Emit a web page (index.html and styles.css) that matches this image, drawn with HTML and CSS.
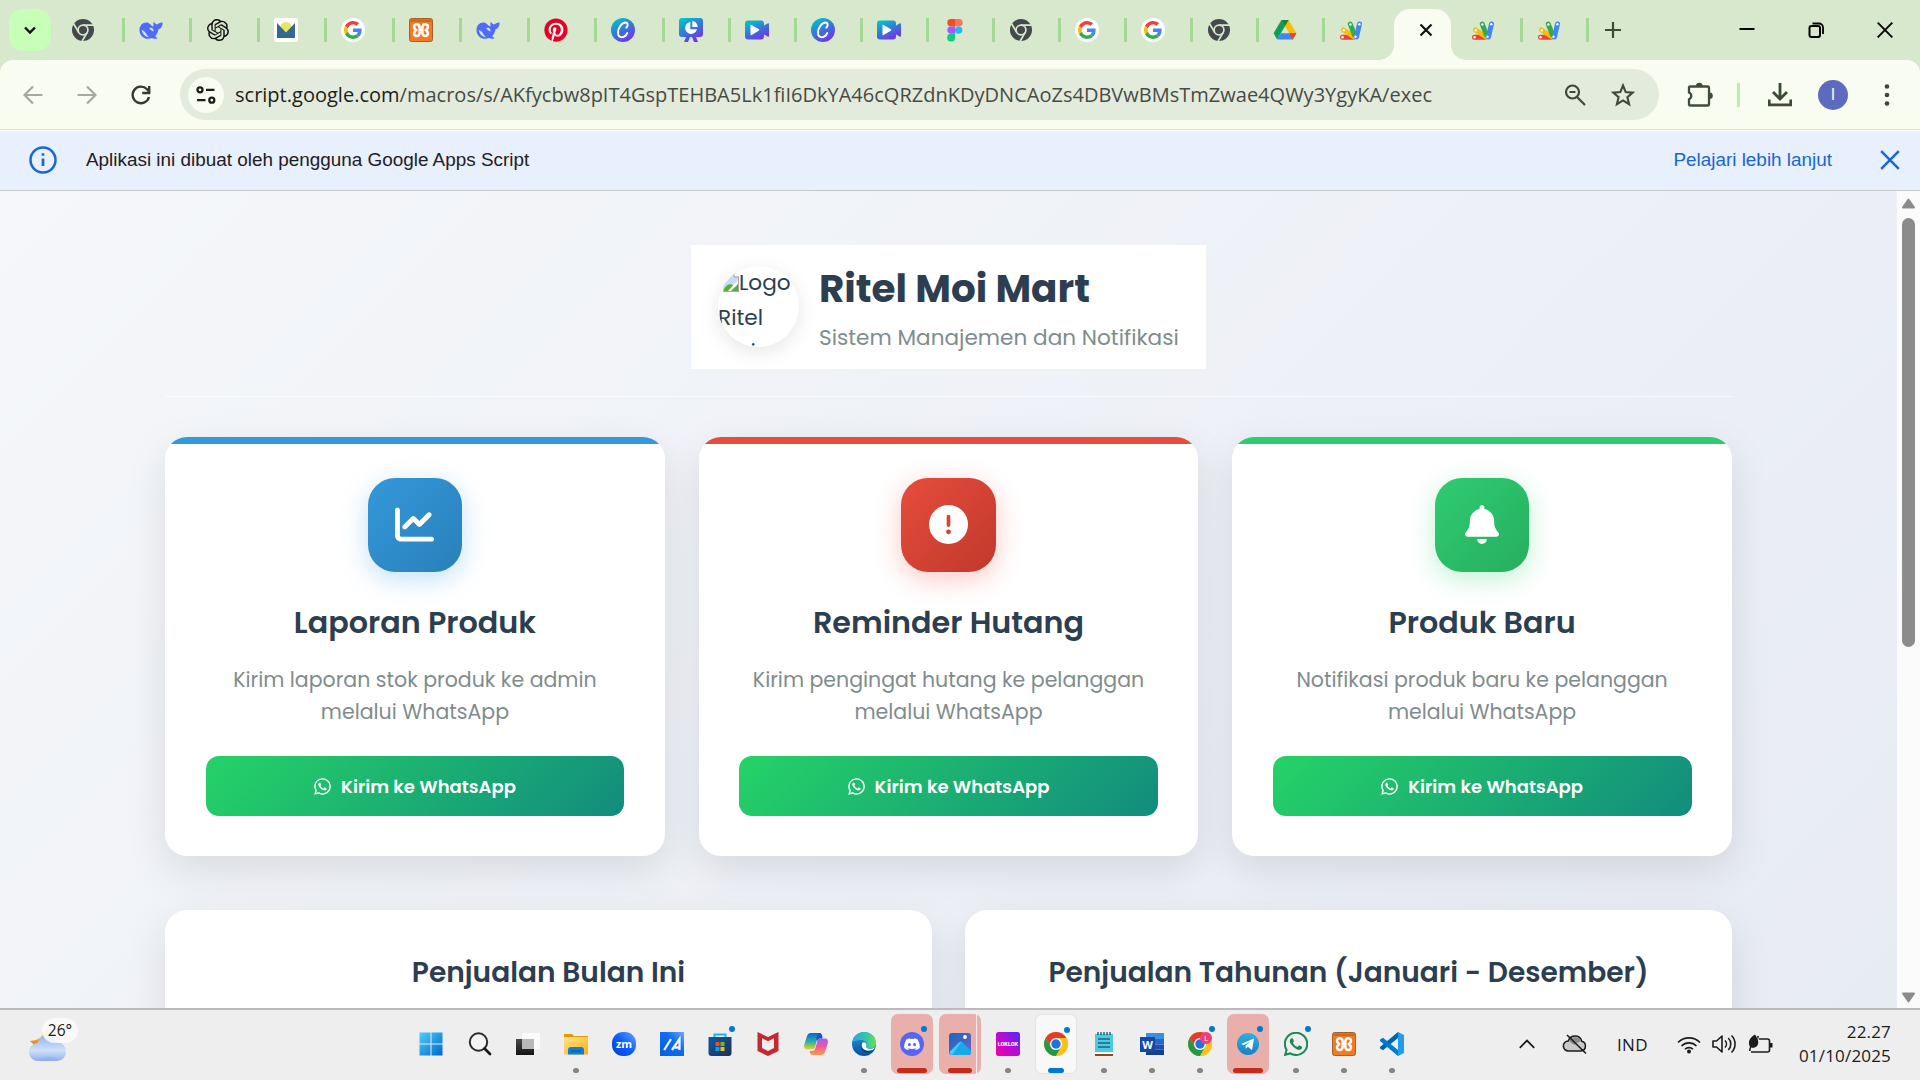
FILE: index.html
```html
<!DOCTYPE html>
<html lang="id">
<head>
<meta charset="utf-8">
<title>Ritel Moi Mart</title>
<link rel="stylesheet" href="styles.css">
</head>
<body>
<svg class="defs" width="0" height="0" aria-hidden="true">
  <defs>
    <linearGradient id="gCanva" x1="0.2" y1="0" x2="0.8" y2="1"><stop offset="0" stop-color="#00c4cc"/><stop offset=".5" stop-color="#3a74d8"/><stop offset="1" stop-color="#7d2ae8"/></linearGradient>
    <linearGradient id="gWin" x1="0" y1="0" x2="1" y2="1"><stop offset="0" stop-color="#4cd0fb"/><stop offset="1" stop-color="#0067c9"/></linearGradient>
    <linearGradient id="gCloud" x1="0" y1="0" x2="0" y2="1"><stop offset="0" stop-color="#8fb4f3"/><stop offset=".6" stop-color="#cfe0f8"/><stop offset="1" stop-color="#8eaef0"/></linearGradient>
    <linearGradient id="gSun" x1="0" y1="0" x2="0" y2="1"><stop offset="0" stop-color="#ffd36a"/><stop offset="1" stop-color="#f07a13"/></linearGradient>
    <linearGradient id="gFolder" x1="0" y1="0" x2="1" y2="1"><stop offset="0" stop-color="#ffe08a"/><stop offset="1" stop-color="#f9b50f"/></linearGradient>
    <linearGradient id="gZoom" x1="0" y1="1" x2="1" y2="0"><stop offset="0" stop-color="#0041c9"/><stop offset=".5" stop-color="#0b5cff"/><stop offset="1" stop-color="#6aa5ff"/></linearGradient>
    <linearGradient id="gMa" x1="0" y1="1" x2="1" y2="0"><stop offset="0" stop-color="#0560dd"/><stop offset=".6" stop-color="#0d6df0"/><stop offset="1" stop-color="#6fa8f8"/></linearGradient>
    <linearGradient id="gStore" x1="0" y1="0" x2="1" y2="1"><stop offset="0" stop-color="#0f5ca8"/><stop offset="1" stop-color="#1c2f55"/></linearGradient>
    <linearGradient id="gCopA" x1="0" y1="0" x2="0" y2="1"><stop offset="0" stop-color="#0b63d8"/><stop offset=".55" stop-color="#2fb6a0"/><stop offset="1" stop-color="#f3d21b"/></linearGradient>
    <linearGradient id="gCopB" x1="0" y1="0" x2="0" y2="1"><stop offset="0" stop-color="#a45cf0"/><stop offset=".5" stop-color="#f0599a"/><stop offset="1" stop-color="#ff9a4c"/></linearGradient>
    <linearGradient id="gEdge" x1="0" y1="0" x2="1" y2="0"><stop offset="0" stop-color="#2aa6df"/><stop offset=".6" stop-color="#35c7a8"/><stop offset="1" stop-color="#6be04a"/></linearGradient>
    <linearGradient id="gEdgeB" x1="0" y1="0" x2="0" y2="1"><stop offset="0" stop-color="#1f9ae0"/><stop offset="1" stop-color="#0c4f9c"/></linearGradient>
    <linearGradient id="gPhoto" x1="0" y1="0" x2="1" y2="1"><stop offset="0" stop-color="#0f6cc6"/><stop offset="1" stop-color="#7b5eb5"/></linearGradient>
    <linearGradient id="gLok" x1="0" y1="1" x2="1" y2="0"><stop offset="0" stop-color="#f500a0"/><stop offset=".5" stop-color="#b80dd0"/><stop offset="1" stop-color="#4b2bff"/></linearGradient>
    <linearGradient id="gTel" x1="0" y1="0" x2="0" y2="1"><stop offset="0" stop-color="#2fb0e6"/><stop offset="1" stop-color="#1583c4"/></linearGradient>
    <linearGradient id="gTask" x1="0" y1="0" x2="0" y2="1"><stop offset="0" stop-color="#4a4a4a"/><stop offset="1" stop-color="#141414"/></linearGradient>
  </defs>

  <symbol id="chromeGray" viewBox="0 0 24 24">
    <circle cx="12" cy="12" r="11" fill="#45494d"/>
    <circle cx="12" cy="12" r="4.900" fill="none" stroke="#d8e8cc" stroke-width="1.700"/>
    <path d="M12 7.100H22M7.700 14.400 2.600 5.800M16.200 14.400 11.200 23" stroke="#d8e8cc" stroke-width="1.700" fill="none"/>
  </symbol>
  <symbol id="whale" viewBox="0 0 24 24">
    <path d="M.5 12C.5 7.500 3.500 4.500 7.500 4.500c1.500 0 2.500.6 3.500 1.500l1.500 1.500c.8.600 1.500.900 2.200 1-.5-1.500-.5-3.500.3-4.800.8 1.300 1.500 2.300 2.800 2.700 1.500-.5 2.800-2 5.900-2-.1 3.600-1.600 6-4.200 6.900-.5 3-1.700 5.200-3.300 6.900l2.300 2c-1.700.9-3.800.9-5.600-.1C7.200 22.400.5 19.200.5 12zm2.200 0c.6 4 3.800 7 7.300 7.200C7.200 16.800 6.500 13 2.700 12zm9.600-2.300c-1.200-.2-2 .4-1.800 1.200 1 .2 2.500 2.200 3.900 2.500.5-1.400-.6-3.400-2.100-3.700z" fill="#4d6bfe" fill-rule="evenodd"/>
  </symbol>
  <symbol id="gpt" viewBox="0 0 24 24"><path fill="#111" d="M22.2819 9.8211a5.9847 5.9847 0 0 0-.5157-4.9108 6.0462 6.0462 0 0 0-6.5098-2.9A6.0651 6.0651 0 0 0 4.9807 4.1818a5.9847 5.9847 0 0 0-3.9977 2.9 6.0462 6.0462 0 0 0 .7427 7.0966 5.98 5.98 0 0 0 .511 4.9107 6.051 6.051 0 0 0 6.5146 2.9001A5.9847 5.9847 0 0 0 13.2599 24a6.0557 6.0557 0 0 0 5.7718-4.2058 5.9894 5.9894 0 0 0 3.9977-2.9001 6.0557 6.0557 0 0 0-.7475-7.0729zm-9.022 12.6081a4.4755 4.4755 0 0 1-2.8764-1.0408l.1419-.0804 4.7783-2.7582a.7948.7948 0 0 0 .3927-.6813v-6.7369l2.02 1.1686a.071.071 0 0 1 .038.052v5.5826a4.504 4.504 0 0 1-4.4945 4.4944zm-9.6607-4.1254a4.4708 4.4708 0 0 1-.5346-3.0137l.142.0852 4.783 2.7582a.7712.7712 0 0 0 .7806 0l5.8428-3.3685v2.3324a.0804.0804 0 0 1-.0332.0615L9.74 19.9502a4.4992 4.4992 0 0 1-6.1408-1.6464zM2.3408 7.8956a4.485 4.485 0 0 1 2.3655-1.9728V11.6a.7664.7664 0 0 0 .3879.6765l5.8144 3.3543-2.0201 1.1685a.0757.0757 0 0 1-.071 0l-4.8303-2.7865A4.504 4.504 0 0 1 2.3408 7.872zm16.5963 3.8558L13.1038 8.364 15.1192 7.2a.0757.0757 0 0 1 .071 0l4.8303 2.7913a4.4944 4.4944 0 0 1-.6765 8.1042v-5.6772a.79.79 0 0 0-.407-.667zm2.0107-3.0231l-.142-.0852-4.7735-2.7818a.7759.7759 0 0 0-.7854 0L9.409 9.2297V6.8974a.0662.0662 0 0 1 .0284-.0615l4.8303-2.7866a4.4992 4.4992 0 0 1 6.6802 4.66zM8.3065 12.863l-2.02-1.1638a.0804.0804 0 0 1-.038-.0567V6.0742a4.4992 4.4992 0 0 1 7.3757-3.4537l-.142.0805L8.704 5.459a.7948.7948 0 0 0-.3927.6813zm1.0976-2.3654l2.602-1.4998 2.6069 1.4998v2.9994l-2.5974 1.4997-2.6067-1.4997Z"/></symbol>
  <symbol id="mail" viewBox="0 0 24 24">
    <rect width="24" height="24" rx="3" fill="#fff"/>
    <circle cx="12" cy="9.500" r="5.600" fill="#ebe75a"/><path d="M3 5l9 9.500L21 5v15H3z" fill="#336699"/>
  </symbol>
  <symbol id="google" viewBox="0 0 24 24">
    <circle cx="12" cy="12" r="12" fill="#fff"/>
    <g transform="translate(3 3) scale(.375)"><path fill="#EA4335" d="M24 9.500c3.540 0 6.710 1.220 9.210 3.600l6.850-6.850C35.900 2.380 30.470 0 24 0 14.620 0 6.510 5.380 2.560 13.220l7.980 6.190C12.430 13.720 17.740 9.500 24 9.500z"/><path fill="#4285F4" d="M46.980 24.550c0-1.570-.15-3.090-.38-4.550H24v9.020h12.940c-.58 2.960-2.260 5.480-4.780 7.180l7.730 6c4.510-4.180 7.090-10.360 7.090-17.650z"/><path fill="#FBBC05" d="M10.530 28.590c-.48-1.450-.76-2.990-.76-4.590s.27-3.140.76-4.590l-7.980-6.190C.92 16.460 0 20.120 0 24c0 3.880.92 7.540 2.560 10.780l7.970-6.190z"/><path fill="#34A853" d="M24 48c6.480 0 11.930-2.130 15.890-5.810l-7.730-6c-2.150 1.450-4.920 2.300-8.160 2.300-6.260 0-11.570-4.220-13.470-9.910l-7.980 6.190C6.510 42.620 14.620 48 24 48z"/></g>
  </symbol>
  <symbol id="xampp" viewBox="0 0 24 24">
    <rect x=".5" y=".5" width="23" height="23" rx="2" fill="#f47a20" stroke="#a5632b"/><path d="M1.500 1.500h21v2.500h-21z" fill="#c96a25"/>
    <g fill="none" stroke="#fff" stroke-width="2.600"><path d="M10.700 10.500C10.700 7.300 9.500 6.200 7.800 6.200 5.600 6.200 4.700 8 5.200 9.700 5.500 10.700 6.300 11.300 7 12 6 13 5.400 13.900 5.100 15 4.800 17 6.200 18 7.800 18 9.700 18 10.700 16.700 10.700 13.500M13.300 10.500C13.300 7.300 14.500 6.200 16.200 6.200 18.400 6.200 19.300 8 18.800 9.700 18.500 10.700 17.700 11.300 17 12 18 13 18.600 13.900 18.900 15 19.200 17 17.800 18 16.200 18 14.300 18 13.300 16.700 13.300 13.500"/><path d="M9.400 12h5.200" stroke-width="3.500"/></g>
  </symbol>
  <symbol id="pinterest" viewBox="0 0 496 512"><circle cx="248" cy="256" r="240" fill="#fff"/><path fill="#e60023" d="M496 256c0 137-111 248-248 248-25.600 0-50.200-3.900-73.400-11.100 10.100-16.500 25.200-43.500 30.800-65 3-11.600 15.400-59 15.400-59 8.100 15.400 31.700 28.500 56.800 28.500 74.800 0 128.700-68.800 128.700-154.300 0-81.900-66.900-143.200-152.900-143.200-107 0-163.900 71.800-163.900 150.100 0 36.400 19.400 81.700 50.300 96.100 4.700 2.200 7.200 1.200 8.300-3.300.8-3.400 5-20.300 6.900-28.100.6-2.500.3-4.700-1.700-7.100-10.100-12.500-18.300-35.300-18.300-56.600 0-54.700 41.400-107.600 112-107.600 60.900 0 103.600 41.500 103.600 100.900 0 67.100-33.900 113.600-78 113.600-24.300 0-42.600-20.100-36.700-44.800 7-29.500 20.500-61.300 20.500-82.600 0-19-10.200-34.900-31.400-34.900-24.900 0-44.900 25.700-44.900 60.200 0 22 7.400 36.800 7.400 36.800s-24.500 103.800-29 123.200c-5 21.400-3 51.600-.9 71.200C65.400 450.900 0 361.100 0 256 0 119 111 8 248 8s248 111 248 248z"/></symbol>
  <symbol id="canva" viewBox="0 0 24 24"><circle cx="12" cy="12" r="12" fill="url(#gCanva)"/><path d="M15.200 9.800c2-1.500 2-5.300-.6-5.300-3.800 0-7.600 5.500-7.600 10 0 2.900 1.400 4.700 3.700 4.700 2.400 0 4.500-1.900 5.600-4.200" fill="none" stroke="#fff" stroke-width="1.900" stroke-linecap="round"/></symbol>
  <symbol id="present" viewBox="0 0 24 24"><path d="M3 0h18a3 3 0 0 1 3 3v13a3 3 0 0 1-3 3h-4l2 5h-4l-2-5h-2l-2 5H5l2-5H3a3 3 0 0 1-3-3V3a3 3 0 0 1 3-3z" fill="url(#gCanva)"/><path d="M11.300 4a6 6 0 1 0 6.700 7.200h-6.700zM13.300 3v6h5.500a6 6 0 0 0-5.500-6z" fill="#fff"/></symbol>
  <symbol id="video" viewBox="0 0 24 24"><path d="M3 2.500h13a3 3 0 0 1 3 3v2L23 5.300c.6-.3 1 0 1 .6v12.200c0 .6-.4.900-1 .6L19 16.500v2a3 3 0 0 1-3 3H3a3 3 0 0 1-3-3v-13a3 3 0 0 1 3-3z" fill="url(#gCanva)"/><path d="M5.500 7.500v9c0 .7.6.9 1.100.6l7.200-4.400c.5-.4.500-1 0-1.400L6.600 6.900c-.5-.3-1.100-.1-1.100.6z" fill="#fff"/></symbol>
  <symbol id="figma" viewBox="0 0 24 24"><path d="M12 1H8a3.700 3.700 0 0 0 0 7.400h4z" fill="#f24e1e"/><path d="M12 1h4a3.700 3.700 0 0 1 0 7.400h-4z" fill="#ff7262"/><path d="M12 8.400H8a3.700 3.700 0 0 0 0 7.400h4z" fill="#a259ff"/><circle cx="15.700" cy="12.100" r="3.700" fill="#1abcfe"/><path d="M12 15.800H8a3.900 3.900 0 1 0 4 3.900z" fill="#0acf83"/></symbol>
  <symbol id="drive" viewBox="0 0 24 24"><path d="M8.400 2h7.200L12 8.300 4.100 21.500.6 15.300z" fill="#0f9d58"/><path d="M8.400 2h7.200l7.800 13.300h-7.200z" fill="#fbbc04"/><path d="M4.300 21.500l3.500-6.200h15.600l-3.600 6.200z" fill="#4285f4"/><path d="M16.200 15.300h7.200l-3.600 6.200z" fill="#ea4335"/><path d="M8.400 2h7.200L12 8.300z" fill="#188038"/></symbol>
  <symbol id="gas" viewBox="0 0 24 24"><g stroke-linecap="round" stroke-width="5"><path d="M3.500 19.300H14" stroke="#ea4335"/><path d="M4.500 12 14.500 18.500" stroke="#fbbc04"/><path d="M11.300 6.200 15.500 17" stroke="#34a853"/><path d="M20.500 6 17.500 19" stroke="#4285f4"/></g><g fill="#fff"><circle cx="3.600" cy="19.300" r="1.200"/><circle cx="4.800" cy="12.300" r="1.200"/><circle cx="11.400" cy="6.500" r="1.200"/><circle cx="20.400" cy="6.200" r="1.200"/><circle cx="16.500" cy="18.800" r="1.200"/></g></symbol>

  <symbol id="chrome" viewBox="0 0 24 24">
    <circle cx="12" cy="12" r="12" fill="#fbc116"/>
    <path d="M1.610 6A12 12 0 0 1 22.400 6H12L6.800 15z" fill="#e33b2e"/>
    <path d="M1.610 6A12 12 0 0 0 12 24l5.200-9a6 6 0 0 1-10.400 0z" fill="#239847"/>
    <path d="M22.400 6A12 12 0 0 1 12 24l5.200-9a6 6 0 0 0-5.200-9z" fill="#fbc116"/>
    <circle cx="12" cy="12" r="6" fill="#fff"/><circle cx="12" cy="12" r="4.700" fill="#1a73e8"/>
  </symbol>
  <symbol id="wa" viewBox="0 0 448 512"><path fill="currentColor" d="M380.900 97.100C339 55.100 283.200 32 223.900 32c-122.400 0-222 99.600-222 222 0 39.100 10.200 77.300 29.600 111L0 480l117.700-30.900c32.400 17.700 68.900 27 106.100 27h.1c122.300 0 224.100-99.600 224.100-222 0-59.300-25.200-115-67.100-157zm-157 341.600c-33.200 0-65.700-8.900-94-25.700l-6.700-4-69.800 18.300L72 359.200l-4.400-7c-18.500-29.400-28.200-63.300-28.200-98.200 0-101.700 82.800-184.500 184.600-184.500 49.300 0 95.600 19.200 130.400 54.100 34.800 34.900 56.200 81.200 56.100 130.500 0 101.800-84.900 184.600-186.600 184.600zm101.200-138.200c-5.500-2.800-32.800-16.200-37.900-18-5.100-1.900-8.800-2.800-12.500 2.800-3.700 5.600-14.300 18-17.600 21.800-3.200 3.700-6.500 4.200-12 1.400-32.600-16.300-54-29.100-75.500-66-5.700-9.800 5.700-9.100 16.300-30.300 1.800-3.700.9-6.900-.5-9.700-1.400-2.800-12.500-30.100-17.100-41.200-4.500-10.800-9.100-9.300-12.500-9.500-3.200-.2-6.900-.2-10.600-.2-3.700 0-9.700 1.400-14.800 6.900-5.100 5.600-19.400 19-19.400 46.300 0 27.300 19.900 53.700 22.600 57.400 2.800 3.700 39.100 59.700 94.800 83.800 35.200 15.200 49 16.500 66.600 13.900 10.700-1.600 32.800-13.400 37.400-26.400 4.600-13 4.600-24.100 3.200-26.400-1.300-2.500-5-3.900-10.500-6.600z"/></symbol>
</svg>

<div class="window">
  <header class="tabstrip">
    <button class="tab-search" aria-label="Cari tab"><svg width="14" height="14" viewBox="0 0 14 14"><path d="M2 4.500 7 9.500l5-5" fill="none" stroke="#111" stroke-width="2.400"/></svg></button>
    <nav class="tabs">
      <div class="tab wide"><svg><use href="#chromeGray"/></svg></div>
      <div class="tab wide"><svg><use href="#whale"/></svg></div>
      <div class="tab wide"><svg><use href="#gpt" x="1" y="1" width="22" height="22"/></svg></div>
      <div class="tab wide"><svg><use href="#mail"/></svg></div>
      <div class="tab wide"><svg><use href="#google"/></svg></div>
      <div class="tab wide"><svg><use href="#xampp"/></svg></div>
      <div class="tab wide"><svg><use href="#whale"/></svg></div>
      <div class="tab wide"><svg><use href="#pinterest"/></svg></div>
      <div class="tab wide"><svg><use href="#canva"/></svg></div>
      <div class="tab"><svg><use href="#present"/></svg></div>
      <div class="tab"><svg><use href="#video"/></svg></div>
      <div class="tab"><svg><use href="#canva"/></svg></div>
      <div class="tab"><svg><use href="#video"/></svg></div>
      <div class="tab"><svg><use href="#figma"/></svg></div>
      <div class="tab"><svg><use href="#chromeGray"/></svg></div>
      <div class="tab"><svg><use href="#google"/></svg></div>
      <div class="tab"><svg><use href="#google"/></svg></div>
      <div class="tab"><svg><use href="#chromeGray"/></svg></div>
      <div class="tab"><svg><use href="#drive"/></svg></div>
      <div class="tab last"><svg><use href="#gas"/></svg></div>
      <div class="tab-active"><svg width="14" height="14" viewBox="0 0 14 14"><path d="M1.500 1.500l11 11m0-11l-11 11" stroke="#111" stroke-width="2.200"/></svg></div>
      <div class="tab"><svg><use href="#gas"/></svg></div>
      <div class="tab"><svg><use href="#gas"/></svg></div>
    </nav>
    <svg class="newtab" width="16" height="16" viewBox="0 0 16 16"><path d="M8 0v16M0 8h16" stroke="#3c4a36" stroke-width="2.200"/></svg>
    <div class="wincontrols">
      <svg width="16" height="16" viewBox="0 0 16 16"><path d="M.5 7h15" stroke="#000" stroke-width="2"/></svg>
      <svg width="16" height="16" viewBox="0 0 16 16"><rect x="1.500" y="4" width="10.500" height="11" rx="2" fill="none" stroke="#000" stroke-width="2"/><path d="M4.500 1.500H11a4 4 0 0 1 4 4V12" fill="none" stroke="#000" stroke-width="1.800"/></svg>
      <svg width="16" height="16" viewBox="0 0 16 16"><path d="M.7 .7l14.600 14.600m0-14.600L.7 15.300" stroke="#000" stroke-width="1.900"/></svg>
    </div>
  </header>

  <div class="toolbar">
    <div class="nav">
      <svg viewBox="0 0 24 24"><path d="M21.500 12H3.500M12 3.500 3.500 12l8.500 8.500" fill="none" stroke="#a5a9a1" stroke-width="2.200"/></svg>
      <svg viewBox="0 0 24 24"><path d="M2.500 12h18M12 3.500l8.500 8.500-8.500 8.500" fill="none" stroke="#a5a9a1" stroke-width="2.200"/></svg>
      <svg viewBox="0 0 24 24"><path d="M20 14a8.300 8.300 0 1 1-2-7.800L20.500 9" fill="none" stroke="#333b2f" stroke-width="2.400"/><path d="M20.200 3v7h-7" fill="none" stroke="#333b2f" stroke-width="2.400"/></svg>
    </div>
    <div class="omnibox">
      <span class="site"><svg width="20" height="20" viewBox="0 0 20 20"><g fill="none" stroke="#1b1e19" stroke-width="2.300"><circle cx="4" cy="4.800" r="2.500"/><path d="M10 4.800h8.500M1 15.200h8.500"/><circle cx="15.800" cy="15.200" r="2.500"/></g></svg></span>
      <span class="url"><b>script.google.com</b>/macros/s/AKfycbw8pIT4GspTEHBA5Lk1fiI6DkYA46cQRZdnKDyDNCAoZs4DBVwBMsTmZwae4QWy3YgyKA/exec</span>
      <svg class="lens" width="22" height="22" viewBox="0 0 22 22"><g fill="none" stroke="#41473d" stroke-width="2.200"><circle cx="8.500" cy="8" r="6.500"/><path d="M5.500 8h6M13 13l8 8"/></g></svg>
      <svg width="24" height="24" viewBox="0 0 24 24"><path d="M12 2.500l2.700 6.600 7.100.5-5.400 4.600 1.700 7L12 17.400l-6.100 3.800 1.700-7-5.400-4.600 7.100-.5z" fill="none" stroke="#41473d" stroke-width="2.100"/></svg>
    </div>
    <div class="actions">
      <svg width="26" height="26" viewBox="0 0 26 26"><path d="M3 4.500h17.500a1.500 1.500 0 0 1 1.500 1.500v16a1.500 1.500 0 0 1-1.500 1.500H3a1 1 0 0 1-1-1v-5.300a3.600 3.600 0 0 0 0-6.700V5.500a1 1 0 0 1 1-1z" fill="none" stroke="#3f4d38" stroke-width="2.300"/><path d="M9 4a3.300 3.300 0 0 1 6.600 0zM22.500 10.500a3.300 3.300 0 0 1 0 6.600z" fill="#3f4d38"/></svg>
      <i class="divider"></i>
      <svg width="24" height="24" viewBox="0 0 24 24"><path d="M12 0v15M5 9l7 7 7-7M1.200 16.500v5.300h21.600v-5.300" fill="none" stroke="#3a4a33" stroke-width="2.800"/></svg>
      <span class="avatar">I</span>
      <svg width="6" height="22" viewBox="0 0 6 22"><g fill="#3a4a33"><circle cx="3" cy="2.500" r="2.300"/><circle cx="3" cy="11" r="2.300"/><circle cx="3" cy="19.500" r="2.300"/></g></svg>
    </div>
  </div>

  <div class="notice">
    <svg width="28" height="28" viewBox="0 0 28 28"><circle cx="14" cy="14" r="12.500" fill="none" stroke="#1967d2" stroke-width="2.500"/><path d="M14 12.500v7.500M14 7.200v2.600" stroke="#1967d2" stroke-width="2.700"/></svg>
    <span class="notice-text">Aplikasi ini dibuat oleh pengguna Google Apps Script</span>
    <a class="notice-link">Pelajari lebih lanjut</a>
    <svg width="20" height="20" viewBox="0 0 20 20"><path d="M1.200 1.200l17.600 17.600m0-17.600L1.200 18.800" stroke="#1967d2" stroke-width="2.500"/></svg>
  </div>

  <div class="view">
    <main class="page">
      <div class="brand-row">
        <div class="brand">
          <div class="logo"><span class="alt"><svg width="16" height="20" viewBox="0 0 16 20"><path d="M0 0h11l5 5v15H0z" fill="#c8dafa"/><path d="M0 20c2-7 7-10 11-6l-6 6z" fill="#53b32b"/><path d="M16 7 4 20h12z" fill="#fff"/><path d="M7 20l9-9v9z" fill="#58a946"/><path d="M11 0v5h5" fill="#fff" stroke="#999"/><path d="M15.500 5v14.500H0" fill="none" stroke="#a8a8a8"/></svg>Logo<br>Ritel<br>Moi</span></div>
          <div>
            <h1>Ritel Moi Mart</h1>
            <p class="tagline">Sistem Manajemen dan Notifikasi</p>
          </div>
        </div>
      </div>

      <section class="cards">
        <article class="card blue">
          <div class="badge"><svg width="39" height="39" viewBox="0 0 512 512"><path fill="#fff" d="M64 64c0-17.700-14.300-32-32-32S0 46.300 0 64V400c0 44.200 35.800 80 80 80H480c17.700 0 32-14.300 32-32s-14.300-32-32-32H80c-8.800 0-16-7.200-16-16V64zm406.600 86.600c12.500-12.500 12.500-32.800 0-45.300s-32.800-12.500-45.300 0L320 210.700l-57.400-57.400c-12.500-12.500-32.800-12.500-45.300 0l-112 112c-12.500 12.500-12.500 32.800 0 45.300s32.800 12.500 45.300 0L240 221.300l57.400 57.400c12.500 12.500 32.800 12.500 45.300 0l128-128z"/></svg></div>
          <h2>Laporan Produk</h2>
          <p>Kirim laporan stok produk ke admin<br>melalui WhatsApp</p>
          <button class="send"><svg><use href="#wa"/></svg>Kirim ke WhatsApp</button>
        </article>
        <article class="card red">
          <div class="badge"><svg width="39" height="39" viewBox="0 0 512 512"><path fill="#fff" d="M256 512A256 256 0 1 0 256 0a256 256 0 1 0 0 512zm0-384c13.300 0 24 10.700 24 24V264c0 13.300-10.700 24-24 24s-24-10.700-24-24V152c0-13.300 10.700-24 24-24zM224 352a32 32 0 1 1 64 0 32 32 0 1 1 -64 0z"/></svg></div>
          <h2>Reminder Hutang</h2>
          <p>Kirim pengingat hutang ke pelanggan<br>melalui WhatsApp</p>
          <button class="send"><svg><use href="#wa"/></svg>Kirim ke WhatsApp</button>
        </article>
        <article class="card green">
          <div class="badge"><svg width="34" height="39" viewBox="0 0 448 512"><path fill="#fff" d="M224 0c-17.700 0-32 14.300-32 32V51.200C119 66 64 130.600 64 208v18.800c0 47-17.300 92.400-48.500 127.600l-7.400 8.300c-8.400 9.400-10.400 22.900-5.300 34.400S19.400 416 32 416H416c12.600 0 24-7.400 29.200-18.900s3.100-25-5.300-34.400l-7.400-8.300C401.300 319.200 384 273.900 384 226.800V208c0-77.400-55-142-128-156.800V32c0-17.700-14.300-32-32-32zm45.300 493.300c12-12 18.700-28.300 18.700-45.300H224 160c0 17 6.700 33.300 18.700 45.300s28.300 18.700 45.300 18.700s33.300-6.700 45.300-18.700z"/></svg></div>
          <h2>Produk Baru</h2>
          <p>Notifikasi produk baru ke pelanggan<br>melalui WhatsApp</p>
          <button class="send"><svg><use href="#wa"/></svg>Kirim ke WhatsApp</button>
        </article>
      </section>

      <section class="charts">
        <article class="chart"><h3>Penjualan Bulan Ini</h3></article>
        <article class="chart"><h3>Penjualan Tahunan (Januari - Desember)</h3></article>
      </section>
    </main>
    <aside class="scrollbar">
      <svg width="15" height="11" viewBox="0 0 15 11"><path d="M7.500 1.500 13 9.500H2z" fill="#8b8b8b" stroke="#8b8b8b" stroke-width="2" stroke-linejoin="round"/></svg>
      <i class="thumb"></i>
      <svg width="15" height="11" viewBox="0 0 15 11"><path d="M7.500 9.500 13 1.500H2z" fill="#8b8b8b" stroke="#8b8b8b" stroke-width="2" stroke-linejoin="round"/></svg>
    </aside>
  </div>

  <footer class="taskbar">
    <div class="weather">
      <svg width="38" height="44" viewBox="0 0 38 44"><path d="M14 14c0 5-4 8-13 9 3 3 5 5 8 5l10-8v-10z" fill="url(#gSun)"/><path d="M9.500 43a9 9 0 0 1-1-18C11 19 15 16 20 17c4 .5 7 3.500 8 7 5 .5 9 4.500 9 9.500a9 9 0 0 1-9 9.500z" fill="url(#gCloud)"/><path d="M10 42c5 .5 15 .5 20 0-4-4-14-4-20 0z" fill="#8fb0ee" opacity=".6"/></svg>
      <span class="temp">26°</span>
    </div>
    <div class="apps">
      <div class="app start"><svg viewBox="0 0 24 24"><path d="M.5.500h11v11H.5zM12.500.500h11v11h-11zM.5 12.500h11v11H.5zM12.500 12.500h11v11h-11z" fill="url(#gWin)"/></svg></div>
      <div class="app"><svg viewBox="0 0 24 24"><circle cx="10.500" cy="10" r="8.700" fill="#fff" fill-opacity=".3" stroke="#2a2a2a" stroke-width="2"/><path d="M16.500 16.500l5.500 5.500" stroke="#1a1a1a" stroke-width="2.800" stroke-linecap="round"/></svg></div>
      <div class="app"><svg viewBox="0 0 24 24"><path d="M0 7h18v16H0z" fill="url(#gTask)"/><path d="M6 1h18v16H6z" fill="#fff" fill-opacity=".75"/><path d="M6 7h12v10H6z" fill="#b8b8b8"/></svg></div>
      <div class="app open"><svg viewBox="0 0 24 24"><path d="M0 2h8l2 2h14v5H0z" fill="#dc9a0a"/><path d="M0 5h24v17.500H0z" fill="url(#gFolder)"/><path d="M4 22.500V18a3 3 0 0 1 3-3h10a3 3 0 0 1 3 3v4.500z" fill="#0f7fd6"/><path d="M7 19h10" stroke="#0a4f93"/></svg></div>
      <div class="app"><svg viewBox="0 0 24 24"><rect width="24" height="24" rx="11" fill="url(#gZoom)"/></svg><span class="glyph zm">zm</span></div>
      <div class="app"><svg viewBox="0 0 24 24"><path d="M0 0h24v24H0z" fill="url(#gMa)"/><path d="M4.200 18 11 7M12 18l7.500-11v11M14.500 15.500h5" fill="none" stroke="#eef3ff" stroke-width="2.300"/></svg></div>
      <div class="app"><i class="dot"></i><svg viewBox="0 0 24 24"><path d="M6.500 6V2.500h11V6" fill="none" stroke="#18b4f2" stroke-width="2"/><path d="M.5 5h23v16a3 3 0 0 1-3 3h-17a3 3 0 0 1-3-3z" fill="url(#gStore)"/><path d="M7.500 10H11.500v4h-4z" fill="#f25022"/><path d="M12.500 10h4v4h-4z" fill="#7fba00"/><path d="M7.500 15h4v4h-4z" fill="#00a4ef"/><path d="M12.500 15h4v4h-4z" fill="#ffb900"/></svg></div>
      <div class="app"><svg viewBox="0 0 24 24"><path d="M1.500 0 12 5 22.500 0v19L12 24 1.500 19zM6 6.200v9.900l6 2.900 6-2.900V6.200l-6 3z" fill="#c22a30" fill-rule="evenodd"/></svg></div>
      <div class="app"><svg viewBox="0 0 24 24"><path d="M7 1h8c2 0 3 1.500 3.500 4h-2c-2 0-3 1-3.500 3l-2 7c-.5 2-1.500 2.500-3 2.500H3C.5 17.500-.5 15 .3 12.500L3 4c.7-2 2-3 4-3z" fill="url(#gCopA)"/><path d="M17 23H9c-2 0-3-1.500-3.500-4h2.400c2 0 3-1 3.500-3l2-7c.5-2 1.500-2.500 3-2.500h4.800c2.500 0 3.300 2.500 2.500 5L21 20c-.7 2-2 3-4 3z" fill="url(#gCopB)"/><path d="M15 1c2 0 3 1.500 3.500 5.500h-2.200c-1.600 0-2.400.5-2.900 2.500L12 6z" fill="#1553c8"/></svg></div>
      <div class="app open"><svg viewBox="0 0 24 24"><circle cx="12" cy="12" r="12" fill="url(#gEdgeB)"/><path d="M.5 10C1.500 4 6.500 0 12.300 0 19 0 24 5 24 10.800c0 4-3 6-6.200 6-3.500 0-4.600-1.500-3.800-2.600 2-3-1-6.200-5-6.200-3.500 0-6.500 1-8.500 2z" fill="url(#gEdge)"/><path d="M9.500 10.500C7 15 10 20.500 15.500 20.500c3 0 5.500-1 7-3.500-3 2-11 2-10-3.500z" fill="#0b3f86"/><path d="M10.200 10.700c2-1.500 5 .3 4 3-.6 1.500.6 3.200 4 3.200 2 0 4-.8 5-2.200-1 3-4 4-7 4-4.500 0-8-4-6-8z" fill="#fff"/></svg></div>
      <div class="app alert"><i class="dot"></i><svg viewBox="0 0 24 24"><circle cx="12" cy="12" r="12" fill="#5865f2"/><path transform="translate(4.200 4.300) scale(.65)" fill="#fff" d="M20.317 4.370a19.800 19.800 0 0 0-4.885-1.515c-.21.375-.444.865-.608 1.250a18.300 18.300 0 0 0-5.487 0 12.600 12.600 0 0 0-.617-1.250A19.700 19.700 0 0 0 3.677 4.370C.533 9.046-.319 13.580.099 18.058a19.900 19.900 0 0 0 5.993 3.030c.462-.63.874-1.295 1.226-1.994a13 13 0 0 1-1.872-.892c.126-.094.252-.192.372-.292a14.200 14.200 0 0 0 12.364 0c.12.099.246.198.373.292a12.300 12.300 0 0 1-1.873.892c.36.698.772 1.362 1.225 1.993a19.800 19.800 0 0 0 6.002-3.030c.5-5.177-.838-9.674-3.549-13.660zM8.020 15.331c-1.183 0-2.157-1.086-2.157-2.419s.956-2.419 2.157-2.419 2.176 1.095 2.157 2.419c0 1.333-.956 2.419-2.157 2.419zm7.975 0c-1.183 0-2.157-1.086-2.157-2.419s.955-2.419 2.157-2.419 2.176 1.095 2.157 2.419c0 1.333-.946 2.419-2.157 2.419z"/></svg></div>
      <div class="app alert stacked"><svg viewBox="0 0 24 24"><rect x="1" y="1" width="22" height="22" rx="3" fill="url(#gPhoto)"/><path d="M1.500 20 11 10.500c1.200-1.200 2.500-1.200 3.700 0L23 18.500V20a3 3 0 0 1-3 3H4a3 3 0 0 1-2.500-3z" fill="#18a8ec"/><path d="M1.500 20 11 10.500c.8-.8 1.600-1 2.500-.8L4 23a3 3 0 0 1-2.500-3z" fill="#35d0ff"/><circle cx="17" cy="5" r="1.900" fill="#fff"/></svg></div>
      <div class="app open"><svg viewBox="0 0 24 24"><rect width="24" height="24" rx="2.500" fill="url(#gLok)"/></svg><span class="glyph lok">LOKLOK</span></div>
      <div class="app current"><i class="dot"></i><svg viewBox="0 0 24 24"><use href="#chrome"/></svg></div>
      <div class="app open"><svg viewBox="0 0 24 24"><path d="M3 2h18v18H3z" fill="#50c8e0"/><path d="M3 21h18v1H3z" fill="#fff"/><path d="M3 22h18v2H3z" fill="#8c4a17"/><path d="M6 0v3M9 0v3M12 0v3M15 0v3M18 0v3" stroke="#17505e" stroke-width="1.300"/><path d="M6 7h12M6 11h12M6 15h12" stroke="#14687d" stroke-width="1.500"/></svg></div>
      <div class="app open"><svg viewBox="0 0 24 24"><path d="M6 1h18v6H6z" fill="#3a8ee6"/><path d="M6 7h18v5.500H6z" fill="#2468c8"/><path d="M6 12.500h18v5H6z" fill="#1a51ad"/><path d="M6 17.500h18V23H6z" fill="#123f90"/><path d="M0 5h15v15H0z" fill="#1747a6"/></svg><span class="glyph word">W</span></div>
      <div class="app open"><i class="dot"></i><svg viewBox="0 0 24 24"><use href="#chrome"/><circle cx="18" cy="6" r="6" fill="#ec407a"/></svg><span class="glyph prof">L</span></div>
      <div class="app alert"><i class="dot"></i><svg viewBox="0 0 24 24"><circle cx="12" cy="12" r="11" fill="url(#gTel)"/><path d="M5 12 18 6.500 16 18l-4.200-3.200-2 2L9.500 13.500l5-4-6.500 3.600z" fill="#fff"/></svg></div>
      <div class="app open green-wa"><i class="dot"></i><svg viewBox="0 0 24 24"><use href="#wa" x="-2" y="-2" width="28" height="28"/></svg></div>
      <div class="app open"><svg viewBox="0 0 24 24"><use href="#xampp"/></svg></div>
      <div class="app open"><svg viewBox="0 0 24 24"><path d="M18 0v6L3 18.200 0 16.500v-1.500z" fill="#0065a9"/><path d="M18 24v-6L3 5.800 0 7.500V9z" fill="#007acc"/><path d="M18 0l6 3v18l-6 3z" fill="#1f9cf0"/></svg></div>
    </div>
    <div class="tray">
      <svg width="16" height="10" viewBox="0 0 16 10"><path d="M.8 8.800 8 1.600l7.200 7.200" fill="none" stroke="#1b1b1b" stroke-width="1.800"/></svg>
      <svg class="t-cloud" width="26" height="22" viewBox="0 0 26 22"><path d="M6.500 18a5 5 0 0 1-.3-10C7.500 4.500 10 3 13 3c3.500 0 6 2 6.700 5.200a5 5 0 0 1-.7 9.800z" fill="#c9c9c9" stroke="#1b1b1b" stroke-width="1.500"/><path d="M7 8c3-5 10-5 12 0l-4 2-3 2z" fill="#8a8a8a"/><path d="M5 2l19 18.500" stroke="#1b1b1b" stroke-width="1.600"/></svg>
      <span class="lang">IND</span>
      <svg class="t-wifi" width="24" height="19" viewBox="0 0 24 19"><g fill="none" stroke="#1b1b1b" stroke-width="1.600"><path d="M1 7.500a15.500 15.500 0 0 1 22 0M4.500 11a10.600 10.600 0 0 1 15 0M8 14.300a5.700 5.700 0 0 1 8 0"/></g><circle cx="12" cy="16.500" r="2" fill="#1b1b1b"/></svg>
      <svg class="t-vol" width="25" height="20" viewBox="0 0 25 20"><g fill="none" stroke="#1b1b1b" stroke-width="1.600"><path d="M1 7h3.500L10 2v16l-5.500-5H1z" stroke-linejoin="round"/><path d="M13 6.500a5 5 0 0 1 0 7M16.300 4a8.500 8.500 0 0 1 0 12M19.500 1.500a12 12 0 0 1 0 17"/></g></svg>
      <svg class="t-bat" width="25" height="20" viewBox="0 0 25 20"><path d="M11 5h8.500a2 2 0 0 1 2 2v9a2 2 0 0 1-2 2H3" fill="none" stroke="#1b1b1b" stroke-width="1.600"/><path d="M22 9h2.500v4.500H22z" fill="#1b1b1b"/><path d="M1 17c0-2 .5-3 1-4C-1 7 3 3 7 .5c2 3 5 8 2 11.500-1.500 1.800-4 2-6 1.500L2.500 17zM9 2h2l-1 4z" fill="#1b1b1b"/></svg>
      <div class="clock"><span>22.27</span><span>01/10/2025</span></div>
    </div>
  </footer>
</div>
</body>
</html>
```
FILE: styles.css
```css
* { box-sizing: border-box; }
html, body { margin: 0; height: 100%; overflow: hidden; }
body { font-family: Poppins, Inter, sans-serif; color: #2c3e50; }
.defs { position: absolute; }
svg { display: block; flex: none; }
button { border: 0; padding: 0; font: inherit; }

.window { display: flex; flex-direction: column; width: 1920px; height: 1080px; overflow: hidden; background: #d8e8cc; }

/* tab strip */
.tabstrip { display: flex; align-items: center; height: 60px; padding-left: 9px; }
.tab-search { display: grid; place-items: center; width: 42px; height: 42px; border-radius: 14px; background: #c7ffb8; }
.tabs { display: flex; align-items: center; height: 60px; margin-left: 6px; }
.tab { width: 66px; height: 24px; padding-left: 14px; border-right: 3px solid #a3d994; }
.tab.wide { width: 67.5px; }
.tab.last { border-right-color: transparent; }
.tab svg { width: 24px; height: 24px; }
.tab-active { position: relative; align-self: flex-end; width: 57px; height: 51px; margin: 0 5.5px 0 3.5px; border-radius: 16px 16px 0 0; background: #f8fcf1; }
.tab-active svg { margin: 14px 0 0 25px; }
.tab-active::before, .tab-active::after { content: ""; position: absolute; bottom: 0; width: 15px; height: 15px; }
.tab-active::before { right: 100%; background: radial-gradient(circle at 0 0, transparent 14.5px, #f8fcf1 15.2px); }
.tab-active::after { left: 100%; background: radial-gradient(circle at 100% 0, transparent 14.5px, #f8fcf1 15.2px); }
.newtab { margin-left: 16px; }
.wincontrols { display: flex; gap: 53px; margin-left: auto; padding-right: 27px; }

/* toolbar */
.toolbar { display: flex; align-items: center; height: 70px; background: #f8fcf1; border-radius: 13px 13px 0 0; border-bottom: 1px solid #d9e0d0; }
.nav { display: flex; gap: 30px; padding-left: 21px; }
.nav svg { width: 24px; height: 24px; }
.omnibox { display: flex; align-items: center; width: 1479px; height: 51px; margin-left: 27px; padding: 0 24px 0 8px; border-radius: 26px; background: #e3ebdc; }
.site { display: grid; place-items: center; width: 36px; height: 36px; border-radius: 50%; background: #f8fcf1; }
.url { flex: 1; margin-left: 11px; font: 20px/28px "Open Sans", sans-serif; letter-spacing: .01px; white-space: nowrap; color: #474b45; }
.url b { font-weight: 400; color: #1b1e19; }
.lens { margin-right: 25px; }
.actions { display: flex; align-items: center; margin-left: 28px; }
.divider { width: 3px; height: 24px; margin: 0 28px 0 24px; background: #b9eeae; }
.avatar { display: grid; place-items: center; width: 30px; height: 30px; margin: 0 36px 0 26px; border-radius: 50%; background: #5c6bc0; color: #fff; font: 16px "Liberation Sans", sans-serif; }

/* information bar */
.notice { display: flex; align-items: center; height: 61px; padding: 0 20px 1px 29px; border-top: 1px solid #fbfdf6; border-bottom: 1px solid #c7c9cc; background: #e8effd; font: 18.9px "Liberation Sans", sans-serif; color: #1f2023; }
.notice-text { margin-left: 29px; white-space: nowrap; }
.notice-link { margin: 0 48px 0 auto; color: #1967d2; white-space: nowrap; }

/* page */
.view { display: flex; height: 817px; overflow: hidden; }
.page { flex: none; width: 1897px; height: 1466px; padding: 54px 165px 0; background: linear-gradient(135deg, #f5f7fa, #e4e8f2); }
.brand-row { display: flex; justify-content: center; height: 152px; padding-bottom: 27px; border-bottom: 1px solid rgba(255,255,255,.6); }
.brand { display: flex; width: 515px; height: 124px; padding: 21px 27px; background: #fff; }
.logo { width: 81px; height: 81px; margin-right: 20px; border-radius: 50%; background: #fff; box-shadow: 0 5px 20px rgba(0,0,0,.1); }
.alt { display: block; width: 81px; height: 81px; overflow: hidden; border-radius: 50%; font-size: 21.6px; line-height: 34.5px; }
.alt svg { display: inline-block; margin-left: 5px; vertical-align: -2px; }
h1 { margin: -1px 0 0; font-size: 38.88px; line-height: 48px; font-weight: 700; white-space: nowrap; }
.tagline { margin: 8px 0 0; font-size: 21.6px; line-height: 34px; color: #7f8c8d; white-space: nowrap; }

.cards { display: grid; grid-template-columns: repeat(3, 1fr); gap: 33.75px; margin-top: 40px; }
.card { display: flex; flex-direction: column; align-items: center; height: 419px; padding: 41px 40.5px 0; border-radius: 22px; background: linear-gradient(var(--line) 7px, #fff 7px); box-shadow: 0 14px 41px rgba(0,0,0,.1); text-align: center; }
.blue { --line: #3498db; --dark: #2980b9; --glow: rgba(52,152,219,.3); }
.red { --line: #e74c3c; --dark: #c0392b; --glow: rgba(231,76,60,.3); }
.green { --line: #2ecc71; --dark: #27ae60; --glow: rgba(46,204,113,.3); }
.badge { display: grid; place-items: center; width: 94.5px; height: 94px; padding-bottom: 2px; border-radius: 27px; background: linear-gradient(135deg, var(--line), var(--dark)); box-shadow: 0 7px 27px var(--glow); }
h2 { margin: 28px 0 0; font-size: 30.24px; line-height: 46px; font-weight: 600; white-space: nowrap; }
.card p { margin: 18px 0 0; font-size: 20.52px; line-height: 32px; color: #7f8c8d; white-space: nowrap; }
.send { display: flex; align-items: center; justify-content: center; gap: 10px; width: 100%; height: 60px; margin-top: 28px; border-radius: 13px; background: linear-gradient(135deg, #25d366, #128c7e); color: #fff; font-size: 18px; font-weight: 600; }
.send svg { width: 17px; height: 19px; }

.charts { display: grid; grid-template-columns: 1fr 1fr; gap: 33px; margin-top: 54px; }
.chart { height: 480px; padding-top: 42px; border-radius: 22px; background: #fff; box-shadow: 0 14px 41px rgba(0,0,0,.1); text-align: center; }
h3 { margin: 0; font-size: 28.08px; line-height: 42px; font-weight: 600; white-space: nowrap; }

.scrollbar { display: flex; flex-direction: column; align-items: center; width: 23px; height: 817px; padding: 7px 0 5px; background: #fbfbfb; }
.thumb { width: 13px; height: 429px; margin: 9px 0 auto; border-radius: 7px; background: #8b8b8b; }

/* taskbar */
.taskbar { display: flex; height: 72px; border-top: 2px solid #bbb; background: #eee; color: #1b1b1b; font-family: "Open Sans", sans-serif; }
.weather { position: relative; width: 408px; padding: 8px 0 0 29px; }
.temp { position: absolute; left: 42px; top: 8px; width: 36px; height: 25px; border-radius: 13px; background: rgba(250,250,250,.88); font-size: 15.5px; line-height: 24px; text-align: center; }
.apps { display: flex; }
.app { position: relative; display: flex; justify-content: center; align-items: center; width: 42px; height: 60px; margin: 4px 3px 0; border-radius: 7px; }
.app > svg { width: 24px; height: 24px; }
.app.start { padding-right: 3px; }
.app.open::after, .app.alert::after, .app.current::after { content: ""; position: absolute; left: 50%; bottom: 1px; width: 6px; height: 5px; margin-left: -3px; border-radius: 3px; background: #858585; }
.app.alert { background: #e9afab; }
.app.alert::after { width: 30px; margin-left: -15px; background: #c42b1c; }
.app.stacked { background: linear-gradient(90deg, #e9afab 37px, #fbeceb 37px 38px, #e9afab 38px); }
.app.stacked::after { width: 24px; margin-left: -12px; }
.app.current { background: #f8f8f8; border: 1px solid #e3e3e3; }
.app.current::after { width: 16px; margin-left: -8px; bottom: 0; background: #0078d4; }
.dot { position: absolute; right: 6px; top: 12px; width: 6px; height: 6px; border-radius: 50%; background: #0078d4; }
.green-wa { color: #1a8a55; }
.glyph { position: absolute; inset: 0; display: grid; place-items: center; color: #fff; font-weight: 700; line-height: 1; }
.zm { font-size: 11px; padding-bottom: 2px; }
.lok { font-size: 5px; font-family: Inter, sans-serif; font-weight: 800; }
.word { font-size: 11px; padding-right: 9px; }
.prof { padding: 0 0 12px 12px; font-size: 7px; font-weight: 400; }

.tray { display: flex; align-items: center; margin-left: auto; padding-right: 29px; height: 68px; }
.t-cloud { margin-left: 27px; }
.lang { width: 30px; margin-left: 29px; font-size: 17px; letter-spacing: .3px; }
.t-wifi { margin-left: 30px; }
.t-vol { margin-left: 11px; }
.t-bat { margin-left: 11px; }
.clock { display: flex; flex-direction: column; align-items: flex-end; width: 118px; font-size: 17px; line-height: 24px; letter-spacing: .18px; }
```
